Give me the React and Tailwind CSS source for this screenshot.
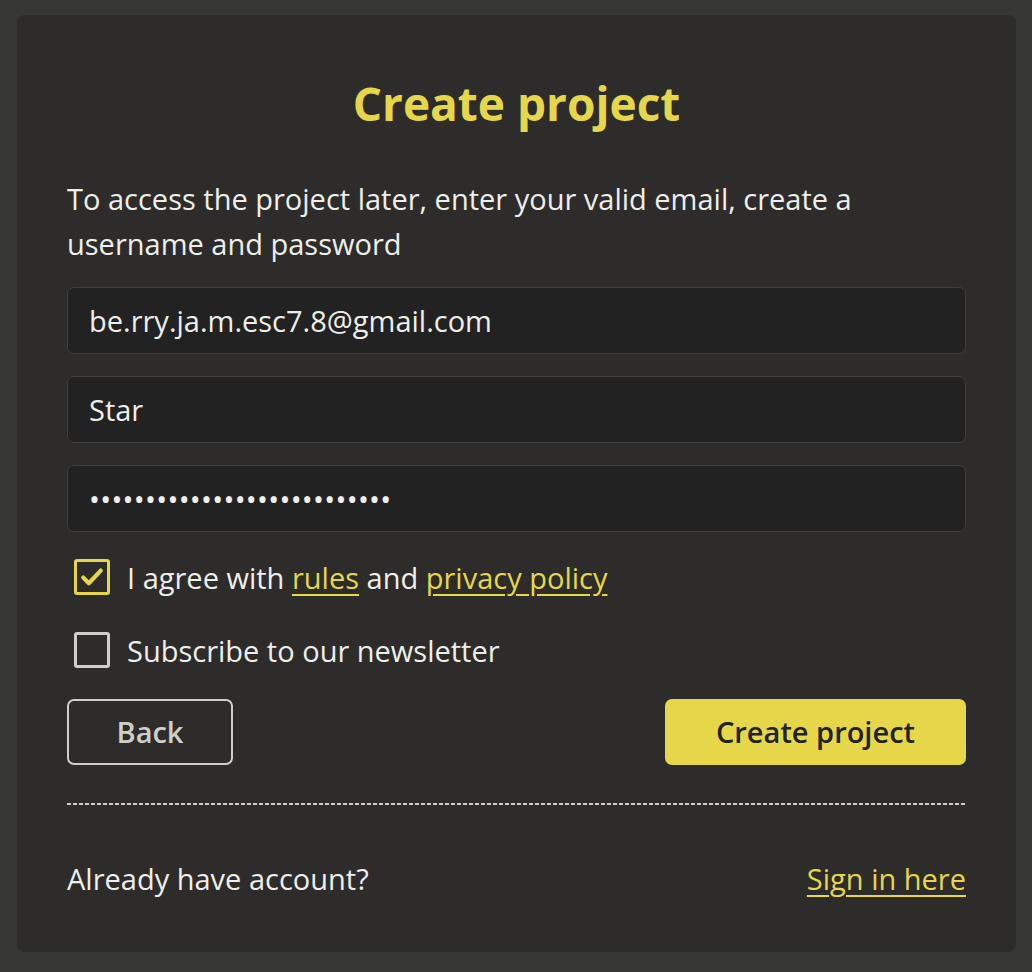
import React, { useState } from "react";

const font = { fontFamily: "'Open Sans', 'Noto Sans', sans-serif" };

const Checkbox = ({ checked, onChange, children }) => (
  <label className="flex items-center gap-[17px] h-[36px] cursor-pointer select-none">
    <span
      onClick={onChange}
      className={
        "ml-[7px] w-[36px] h-[36px] rounded-[3px] border-[3px] flex items-center justify-center " +
        (checked ? "border-[#e6d74a]" : "border-[#cfcfca]")
      }
    >
      {checked && (
        <svg width="28" height="28" viewBox="0 0 24 24" fill="none">
          <path d="M4.5 12.5l4.8 4.8L19.5 6.5" stroke="#e6d74a" strokeWidth="3.6" strokeLinecap="round" strokeLinejoin="round" />
        </svg>
      )}
    </span>
    <span className="text-[29px] text-[#eeeeea] leading-none">{children}</span>
  </label>
);

const App = () => {
  const [data, setData] = useState({
    email: "be.rry.ja.m.esc7.8@gmail.com",
    username: "Star",
    password: "xxxxxxxxxxxxxxxxxxxxxxxxxxx",
  });
  const [agree, setAgree] = useState(true);
  const [subscribe, setSubscribe] = useState(false);

  const handleChange = (e) => {
    const { name, value } = e.target;
    setData((prev) => ({ ...prev, [name]: value }));
  };

  const inputClass =
    "block w-full h-[67px] bg-[#222222] border border-[#403f3c] rounded-[7px] px-[21px] text-[29px] text-[#eeeeea] outline-none";

  return (
    <div className="min-h-screen bg-[#363632] pt-[15px] pb-[21px] pl-[17px] pr-[16px]" style={font}>
      <div className="bg-[#2d2c2a] rounded-[8px] px-[50px] pt-[75px] pb-[55px]">
        <h1 className="text-center text-[46px] font-bold leading-[56px] text-[#e6d74a] -mt-[15px]">
          Create project
        </h1>
        <p className="mt-[45px] text-[29px] leading-[45px] text-[#eeeeea]">
          To access the project later, enter your valid email, create a username and password
        </p>
        <form className="mt-[21px]" onSubmit={(e) => e.preventDefault()}>
          <input type="email" name="email" value={data.email} onChange={handleChange} className={inputClass} style={font} />
          <input type="text" name="username" value={data.username} onChange={handleChange} className={inputClass + " mt-[22px]"} style={font} />
          <input type="password" name="password" value={data.password} onChange={handleChange} className={inputClass + " mt-[22px] tracking-[0.3px]"} style={font} />

          <div className="mt-[27px]">
            <Checkbox checked={agree} onChange={() => setAgree(!agree)}>
              I agree with{" "}
              <a href="#" className="text-[#e6d74a] underline underline-offset-[5px]">rules</a>{" "}
              and{" "}
              <a href="#" className="text-[#e6d74a] underline underline-offset-[5px]">privacy policy</a>
            </Checkbox>
          </div>
          <div className="mt-[37px]">
            <Checkbox checked={subscribe} onChange={() => setSubscribe(!subscribe)}>
              Subscribe to our newsletter
            </Checkbox>
          </div>

          <div className="mt-[31px] flex justify-between">
            <button type="button" className="w-[166px] h-[66px] border-2 border-[#cfcfca] rounded-[7px] text-[29px] font-semibold text-[#cfcfca]">
              Back
            </button>
            <button type="submit" className="w-[301px] h-[66px] bg-[#e6d74a] rounded-[7px] text-[29px] font-semibold text-[#222222]">
              Create project
            </button>
          </div>
        </form>

        <div className="mt-[38px] h-[2px] bg-[repeating-linear-gradient(to_right,#cfcfca_0_4px,transparent_4px_6px)]" />

        <div className="mt-[56px] flex justify-between items-center text-[29px] leading-[36px]">
          <span className="text-[#eeeeea]">Already have account?</span>
          <a href="#" className="text-[#e6d74a] underline underline-offset-[5px]">Sign in here</a>
        </div>
      </div>
    </div>
  );
};

export default App;
